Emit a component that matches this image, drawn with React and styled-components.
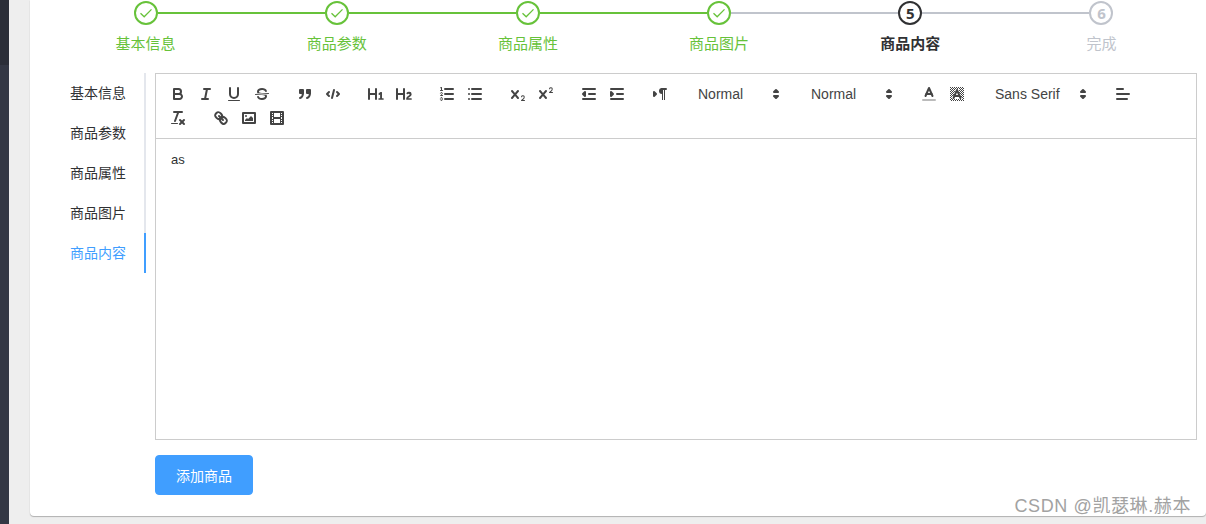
import React from 'react';
import styled, { createGlobalStyle } from 'styled-components';

const GlobalStyle = createGlobalStyle`
  html, body {
    margin: 0;
    padding: 0;
    height: 100%;
    overflow: hidden;
    background: #eeeeee;
  }
  body {
    font-family: "Liberation Sans", "Noto Sans CJK SC", sans-serif;
  }
`;

const Page = styled.div`
  position: relative;
  display: flex;
  width: 1206px;
  height: 524px;
  overflow: hidden;
  background: #eeeeee;
`;

const Aside = styled.aside`
  display: flex;
  flex-direction: column;
  flex: 0 0 9px;
`;

const AsideTop = styled.div`
  flex: 0 0 65px;
  background: #2b2e38;
`;

const AsideRest = styled.div`
  flex: 1;
  background: #333744;
`;

const Main = styled.main`
  flex: 1;
  padding: 0 0 0 21px;
  min-width: 0;
`;

const Card = styled.section`
  box-sizing: border-box;
  height: 516px;
  padding: 1px 9px 0 20px;
  background: #fff;
  border-radius: 0 0 4px 4px;
  box-shadow: 0 1px 1px rgba(0, 0, 0, 0.25), 0 0 1px rgba(0, 0, 0, 0.12);
`;

const Steps = styled.div`
  display: flex;
`;

const Step = styled.div`
  flex: 1;
  text-align: center;
`;

const StepHead = styled.div`
  display: flex;
  align-items: center;
  height: 24px;
`;

const StepLine = styled.div`
  flex: 1;
  height: 2px;
  background: ${(p) => (p.$hidden ? 'transparent' : p.$done ? '#67c23a' : '#c0c4cc')};
`;

const stepColors = {
  finish: '#67c23a',
  process: '#303133',
  wait: '#c0c4cc',
};

const StepIcon = styled.div`
  box-sizing: border-box;
  display: flex;
  align-items: center;
  justify-content: center;
  flex: 0 0 24px;
  height: 24px;
  border: 2px solid ${(p) => stepColors[p.$status]};
  border-radius: 50%;
  color: ${(p) => stepColors[p.$status]};
  font-size: 15px;
  font-weight: 700;
  font-family: "Open Sans", "Liberation Sans", sans-serif;
`;

const StepTitle = styled.div`
  font-size: 15px;
  line-height: 38px;
  color: ${(p) => stepColors[p.$status]};
  font-weight: ${(p) => (p.$status === 'process' ? 700 : 400)};
`;

const Body = styled.div`
  display: flex;
  align-items: flex-start;
  margin-top: 10px;
`;

const Tabs = styled.nav`
  flex: 0 0 96px;
  margin-right: 9px;
  border-right: 2px solid #e4e7ed;
  box-sizing: border-box;
`;

const Tab = styled.div`
  height: 40px;
  line-height: 40px;
  padding-right: 18px;
  margin-right: -2px;
  text-align: right;
  font-size: 14px;
  color: ${(p) => (p.$active ? '#409eff' : '#303133')};
  border-right: 2px solid ${(p) => (p.$active ? '#409eff' : 'transparent')};
`;

const Content = styled.div`
  flex: 1;
  min-width: 0;
`;

const Editor = styled.div`
  box-sizing: border-box;
  height: 367px;
  border: 1px solid #ccc;
  display: flex;
  flex-direction: column;
`;

const Toolbar = styled.div`
  display: flex;
  flex-wrap: wrap;
  padding: 8px;
  border-bottom: 1px solid #ccc;
`;

const ToolGroup = styled.span`
  display: inline-flex;
  margin-right: 15px;
`;

const ToolButton = styled.span`
  box-sizing: border-box;
  display: block;
  width: 28px;
  height: 24px;
  padding: 3px 5px;

  svg {
    display: block;
    width: 18px;
    height: 18px;
    fill: none;
    stroke: #444;
    stroke-width: 2;
    stroke-linecap: round;
    stroke-linejoin: round;
  }

  .thin {
    stroke-width: 1;
  }
  .fill {
    fill: #444;
    stroke: none;
  }
  .both {
    fill: #444;
  }
`;

const Picker = styled.span`
  box-sizing: border-box;
  display: flex;
  align-items: center;
  justify-content: space-between;
  width: ${(p) => p.$width}px;
  height: 24px;
  padding-left: 9px;
  font-size: 14px;
  font-weight: 500;
  color: #444;

  svg {
    display: block;
    width: 18px;
    height: 18px;
    margin-right: 2px;
    fill: none;
    stroke: #444;
    stroke-width: 2;
    stroke-linejoin: round;
  }
`;

const EditorArea = styled.div`
  flex: 1;
  padding: 12px 15px;
  font-size: 13px;
  line-height: 1.42;
  color: #303133;
`;

const SubmitButton = styled.button`
  display: block;
  box-sizing: border-box;
  width: 98px;
  height: 40px;
  margin-top: 15px;
  border: 1px solid #409eff;
  border-radius: 4px;
  background: #409eff;
  color: #fff;
  font-family: inherit;
  font-size: 14px;
`;

const Watermark = styled.div`
  position: absolute;
  right: 15px;
  top: 493px;
  font-size: 18px;
  line-height: 26px;
  letter-spacing: 0.6px;
  color: #a2a2a2;
  text-shadow: 0 0 1px #fff;
`;

const Icon = ({ children }) => (
  <ToolButton>
    <svg viewBox="0 0 18 18">{children}</svg>
  </ToolButton>
);

const Arrows = () => (
  <svg viewBox="0 0 18 18">
    <polygon points="7 11 9 13 11 11 7 11" />
    <polygon points="7 7 9 5 11 7 7 7" />
  </svg>
);

const Check = () => (
  <svg width="14" height="14" viewBox="0 0 14 14" fill="none" stroke="#67c23a" strokeWidth="1.3">
    <path d="M1.5 7.2 5.2 10.8 12.5 3.4" />
  </svg>
);

const steps = [
  { title: '基本信息', status: 'finish' },
  { title: '商品参数', status: 'finish' },
  { title: '商品属性', status: 'finish' },
  { title: '商品图片', status: 'finish' },
  { title: '商品内容', status: 'process' },
  { title: '完成', status: 'wait' },
];

const tabs = ['基本信息', '商品参数', '商品属性', '商品图片', '商品内容'];

// dither behind the background colour icon, leaving a gap round the letter
const checker = [];
for (let y = 2; y < 16; y++) {
  for (let x = 2; x < 16; x++) {
    const half = ((y - 5) * 3.5) / 8;
    const nearLetter = y >= 4 && y <= 13 && Math.abs(x + 0.5 - 9) < Math.max(half, 0) + 1.6;
    if ((x + y) % 2 === 0 && !nearLetter) {
      checker.push(<rect key={`${x}-${y}`} className="fill" x={x} y={y} width="1" height="1" />);
    }
  }
}

function App() {
  return (
    <Page>
      <GlobalStyle />
      <Aside>
        <AsideTop />
        <AsideRest />
      </Aside>
      <Main>
        <Card>
          <Steps>
            {steps.map((s, i) => (
              <Step key={s.title}>
                <StepHead>
                  <StepLine $hidden={i === 0} $done={i <= 3} />
                  <StepIcon $status={s.status}>
                    {s.status === 'finish' ? <Check /> : i + 1}
                  </StepIcon>
                  <StepLine $hidden={i === steps.length - 1} $done={i < 3} />
                </StepHead>
                <StepTitle $status={s.status}>{s.title}</StepTitle>
              </Step>
            ))}
          </Steps>
          <Body>
            <Tabs>
              {tabs.map((t, i) => (
                <Tab key={t} $active={i === 4}>{t}</Tab>
              ))}
            </Tabs>
            <Content>
              <Editor>
                <Toolbar>
                  <ToolGroup>
                    <Icon>
                      <path d="M5,4H9.5A2.5,2.5,0,0,1,12,6.5v0A2.5,2.5,0,0,1,9.5,9H5A0,0,0,0,1,5,9V4A0,0,0,0,1,5,4Z" />
                      <path d="M5,9h5.5A2.5,2.5,0,0,1,13,11.5v0A2.5,2.5,0,0,1,10.5,14H5a0,0,0,0,1,0,0V9A0,0,0,0,1,5,9Z" />
                    </Icon>
                    <Icon>
                      <line x1="7" x2="13" y1="4" y2="4" />
                      <line x1="5" x2="11" y1="14" y2="14" />
                      <line x1="8" x2="10" y1="14" y2="4" />
                    </Icon>
                    <Icon>
                      <path d="M5,3V9a4.012,4.012,0,0,0,4,4H9a4.012,4.012,0,0,0,4-4V3" />
                      <rect className="fill" height="1" rx="0.5" ry="0.5" width="12" x="3" y="15" />
                    </Icon>
                    <Icon>
                      <line className="thin" x1="15.5" x2="2.5" y1="8.5" y2="9.5" />
                      <path className="fill" d="M9.007,8C6.542,7.791,6,7.519,6,6.5,6,5.792,7.283,5,9,5c1.571,0,2.765.679,2.969,1.309a1,1,0,0,0,1.9-.617C13.356,4.106,11.354,3,9,3,6.2,3,4,4.538,4,6.5a3.2,3.2,0,0,0,.5,1.843Z" />
                      <path className="fill" d="M8.984,10C11.457,10.208,12,10.479,12,11.5c0,.708-1.283,1.5-3,1.5-1.571,0-2.765-.679-2.969-1.309a1,1,0,1,0-1.9.617C4.644,13.894,6.646,15,9,15c2.8,0,5-1.538,5-3.5a3.2,3.2,0,0,0-.5-1.843Z" />
                    </Icon>
                  </ToolGroup>
                  <ToolGroup>
                    <Icon>
                      <rect className="both" height="3" width="3" x="4" y="5" />
                      <rect className="both" height="3" width="3" x="11" y="5" />
                      <path d="M7,8c0,4.031-3,5-3,5" />
                      <path d="M14,8c0,4.031-3,5-3,5" />
                    </Icon>
                    <Icon>
                      <polyline points="5 7 3 9 5 11" />
                      <polyline points="13 7 15 9 13 11" />
                      <line x1="10" x2="8" y1="5" y2="13" />
                    </Icon>
                  </ToolGroup>
                  <ToolGroup>
                    <Icon>
                      <path className="fill" d="M10,4V14a1,1,0,0,1-2,0V10H3v4a1,1,0,0,1-2,0V4A1,1,0,0,1,3,4V8H8V4a1,1,0,0,1,2,0Zm6.06787,9.209H14.98975V7.59863a.54085.54085,0,0,0-.605-.60547h-.62744a1.01119,1.01119,0,0,0-.748.29688L11.645,8.56641a.5435.5435,0,0,0-.022.8584l.28613.30762a.53861.53861,0,0,0,.84717.0332l.09912-.08789a1.2137,1.2137,0,0,0,.2417-.35254h.02246s-.01123.30859-.01123.60547V13.209H12.041a.54085.54085,0,0,0-.605.60547v.43945a.54085.54085,0,0,0,.605.60547h4.02686a.54085.54085,0,0,0,.605-.60547v-.43945A.54085.54085,0,0,0,16.06787,13.209Z" />
                    </Icon>
                    <Icon>
                      <path className="fill" d="M16.73975,13.81445v.43945a.54085.54085,0,0,1-.605.60547H11.855a.58392.58392,0,0,1-.64893-.60547V14.0127c0-2.90527,3.39941-3.42187,3.39941-4.55469a.77675.77675,0,0,0-.84717-.78125,1.17684,1.17684,0,0,0-.83594.38477c-.2749.26367-.561.374-.85791.13184l-.4292-.34082c-.30811-.24219-.38525-.51758-.1543-.81445a2.97155,2.97155,0,0,1,2.45361-1.17676,2.45393,2.45393,0,0,1,2.68408,2.40918c0,2.45312-3.1792,2.92676-3.27832,3.93848h2.79443A.54085.54085,0,0,1,16.73975,13.81445ZM9,3A.99974.99974,0,0,0,8,4V8H3V4A1,1,0,0,0,1,4V14a1,1,0,0,0,2,0V10H8v4a1,1,0,0,0,2,0V4A.99974.99974,0,0,0,9,3Z" />
                    </Icon>
                  </ToolGroup>
                  <ToolGroup>
                    <Icon>
                      <line x1="7" x2="15" y1="4" y2="4" />
                      <line x1="7" x2="15" y1="9" y2="9" />
                      <line x1="7" x2="15" y1="14" y2="14" />
                      <line className="thin" x1="2.5" x2="4.5" y1="5.5" y2="5.5" />
                      <path className="fill" d="M3.5,6A0.5,0.5,0,0,1,3,5.5V3.085l-0.276.138A0.5,0.5,0,0,1,2.053,3c-0.124-.247-0.023-0.324.224-0.447l1-.5A0.5,0.5,0,0,1,4,2.5v3A0.5,0.5,0,0,1,3.5,6Z" />
                      <path className="thin" d="M4.5,10.5h-2c0-.234,1.85-1.076,1.85-2.234A0.959,0.959,0,0,0,2.5,8.156" />
                      <path className="thin" d="M2.5,14.846a0.959,0.959,0,0,0,1.85-.109A0.7,0.7,0,0,0,3.75,14a0.688,0.688,0,0,0,.6-0.736,0.959,0.959,0,0,0-1.85-.109" />
                    </Icon>
                    <Icon>
                      <line x1="6" x2="15" y1="4" y2="4" />
                      <line x1="6" x2="15" y1="9" y2="9" />
                      <line x1="6" x2="15" y1="14" y2="14" />
                      <line x1="3" x2="3" y1="4" y2="4" />
                      <line x1="3" x2="3" y1="9" y2="9" />
                      <line x1="3" x2="3" y1="14" y2="14" />
                    </Icon>
                  </ToolGroup>
                  <ToolGroup>
                    <Icon>
                      <path className="fill" d="M15.5,15H13.861a3.858,3.858,0,0,0,1.914-2.975,1.8,1.8,0,0,0-1.6-1.751A1.921,1.921,0,0,0,12.021,11.7a0.50013,0.50013,0,1,0,.957.291h0a0.914,0.914,0,0,1,1.053-.725,0.81,0.81,0,0,1,.744.762c0,1.076-1.16971,1.86982-1.93971,2.43082A1.45639,1.45639,0,0,0,12,15.5a0.5,0.5,0,0,0,.5.5h3A0.5,0.5,0,0,0,15.5,15Z" />
                      <path className="fill" d="M9.65,5.241a1,1,0,0,0-1.409.108L6,7.964,3.759,5.349A1,1,0,0,0,2.192,6.59178Q2.21541,6.6213,2.241,6.649L4.684,9.5,2.241,12.35A1,1,0,0,0,3.71,13.70722q0.02557-.02768.049-0.05722L6,11.036,8.241,13.65a1,1,0,1,0,1.567-1.24277Q9.78459,12.3777,9.759,12.35L7.316,9.5,9.759,6.651A1,1,0,0,0,9.65,5.241Z" />
                    </Icon>
                    <Icon>
                      <path className="fill" d="M15.5,7H13.861a4.015,4.015,0,0,0,1.914-2.975,1.8,1.8,0,0,0-1.6-1.751A1.922,1.922,0,0,0,12.021,3.7a0.5,0.5,0,1,0,.957.291,0.917,0.917,0,0,1,1.053-.725,0.81,0.81,0,0,1,.744.762c0,1.077-1.164,1.925-1.934,2.486A1.423,1.423,0,0,0,12,7.5a0.5,0.5,0,0,0,.5.5h3A0.5,0.5,0,0,0,15.5,7Z" />
                      <path className="fill" d="M9.651,5.241a1,1,0,0,0-1.41.108L6,7.964,3.759,5.349a1,1,0,1,0-1.519,1.3L4.683,9.5,2.241,12.35a1,1,0,1,0,1.519,1.3L6,11.036l2.241,2.614a1,1,0,0,0,1.519-1.3L7.317,9.5,9.759,6.651A1,1,0,0,0,9.651,5.241Z" />
                    </Icon>
                  </ToolGroup>
                  <ToolGroup>
                    <Icon>
                      <line x1="3" x2="15" y1="14" y2="14" />
                      <line x1="3" x2="15" y1="4" y2="4" />
                      <line x1="9" x2="15" y1="9" y2="9" />
                      <polyline className="both" points="5 7 5 11 3 9 5 7" />
                    </Icon>
                    <Icon>
                      <line x1="3" x2="15" y1="14" y2="14" />
                      <line x1="3" x2="15" y1="4" y2="4" />
                      <line x1="9" x2="15" y1="9" y2="9" />
                      <polyline className="both" points="3 7 3 11 5 9 3 7" />
                    </Icon>
                  </ToolGroup>
                  <ToolGroup>
                    <Icon>
                      <polygon className="both" points="3 11 5 9 3 7 3 11" />
                      <line x1="15" x2="11" y1="4" y2="4" />
                      <path className="fill" d="M11,3a3,3,0,0,0,0,6h1V3H11Z" />
                      <rect className="fill" height="11" width="1" x="11" y="4" />
                      <rect className="fill" height="11" width="1" x="13" y="4" />
                    </Icon>
                  </ToolGroup>
                  <ToolGroup>
                    <Picker $width={98}>Normal<Arrows /></Picker>
                  </ToolGroup>
                  <ToolGroup>
                    <Picker $width={98}>Normal<Arrows /></Picker>
                  </ToolGroup>
                  <ToolGroup>
                    <Icon>
                      <line x1="3" x2="15" y1="15" y2="15" stroke="#bbb" />
                      <polyline points="5.5 11 9 3 12.5 11" />
                      <line x1="11.63" x2="6.38" y1="9" y2="9" />
                    </Icon>
                    <Icon>
                      {checker}
                      <polyline points="5.5 13 9 5 12.5 13" />
                      <line x1="11.63" x2="6.38" y1="11" y2="11" />
                    </Icon>
                  </ToolGroup>
                  <ToolGroup>
                    <Picker $width={108}>Sans Serif<Arrows /></Picker>
                  </ToolGroup>
                  <ToolGroup>
                    <Icon>
                      <line x1="3" x2="15" y1="9" y2="9" />
                      <line x1="3" x2="13" y1="14" y2="14" />
                      <line x1="3" x2="9" y1="4" y2="4" />
                    </Icon>
                  </ToolGroup>
                  <ToolGroup>
                    <Icon>
                      <line x1="5" x2="13" y1="3" y2="3" />
                      <line x1="6" x2="9.35" y1="12" y2="3" />
                      <line x1="11" x2="15" y1="11" y2="15" />
                      <line x1="15" x2="11" y1="11" y2="15" />
                      <rect className="fill" height="1" rx="0.5" ry="0.5" width="7" x="2" y="14" />
                    </Icon>
                  </ToolGroup>
                  <ToolGroup>
                    <Icon>
                      <line x1="7" x2="11" y1="7" y2="11" />
                      <path d="M8.9,4.577a3.476,3.476,0,0,1,.36,4.679A3.476,3.476,0,0,1,4.577,8.9C3.185,7.5,2.035,6.4,4.217,4.217S7.5,3.185,8.9,4.577Z" />
                      <path d="M13.423,9.1a3.476,3.476,0,0,0-4.679-.36,3.476,3.476,0,0,0,.36,4.679c1.392,1.392,2.5,2.542,4.679.36S14.815,10.5,13.423,9.1Z" />
                    </Icon>
                    <Icon>
                      <rect height="10" width="12" x="3" y="4" />
                      <circle className="fill" cx="6" cy="7" r="1" />
                      <polyline className="fill" points="5 12 5 11 7 9 8 10 11 7 13 9 13 12 5 12" />
                    </Icon>
                    <Icon>
                      <rect height="12" width="12" x="3" y="3" />
                      <rect className="fill" height="12" width="1" x="5" y="3" />
                      <rect className="fill" height="12" width="1" x="12" y="3" />
                      <rect className="fill" height="2" width="8" x="5" y="8" />
                      <rect className="fill" height="1" width="3" x="3" y="5" />
                      <rect className="fill" height="1" width="3" x="3" y="7" />
                      <rect className="fill" height="1" width="3" x="3" y="10" />
                      <rect className="fill" height="1" width="3" x="3" y="12" />
                      <rect className="fill" height="1" width="3" x="12" y="5" />
                      <rect className="fill" height="1" width="3" x="12" y="7" />
                      <rect className="fill" height="1" width="3" x="12" y="10" />
                      <rect className="fill" height="1" width="3" x="12" y="12" />
                    </Icon>
                  </ToolGroup>
                </Toolbar>
                <EditorArea>as</EditorArea>
              </Editor>
              <SubmitButton>添加商品</SubmitButton>
            </Content>
          </Body>
        </Card>
      </Main>
      <Watermark>CSDN @凯瑟琳.赫本</Watermark>
    </Page>
  );
}

export default App;
